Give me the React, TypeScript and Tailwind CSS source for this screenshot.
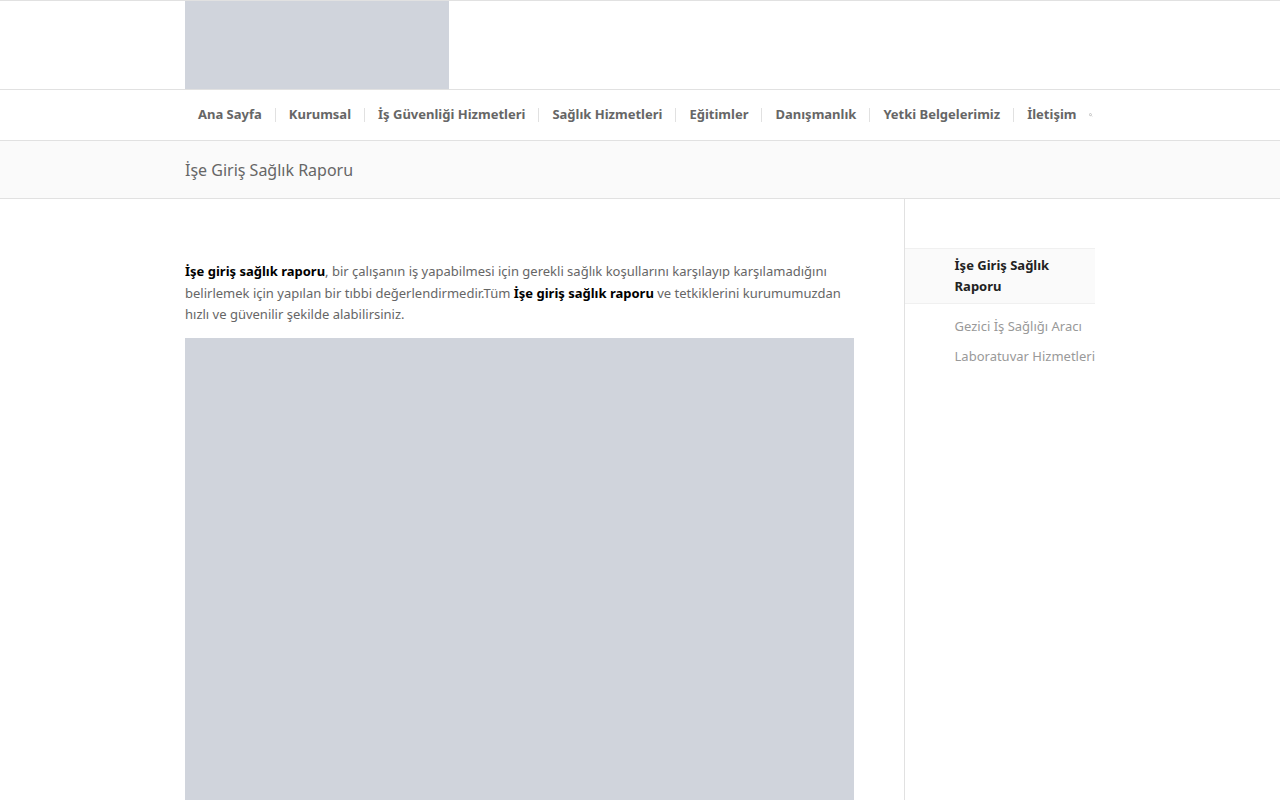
const nav = ["Ana Sayfa", "Kurumsal", "İş Güvenliği Hizmetleri", "Sağlık Hizmetleri", "Eğitimler", "Danışmanlık", "Yetki Belgelerimiz", "İletişim"];

export default function App() {
  return (
    <div className="min-h-[800px] bg-white text-[#666] font-['Liberation_Sans',Arial,sans-serif]">
      <header className="border-t border-[#e1e1e1]">
        <div className="mx-auto w-[910px] h-[88px]">
          <div className="w-[264px] h-[88px] bg-[#d0d4dc]" />
        </div>
        <div className="border-t border-b border-[#e1e1e1]">
          <div className="mx-auto w-[910px] h-[50px] flex items-center">
            {nav.map((n, i) => (
              <div key={n} className="flex items-center">
                {i > 0 && <span className="w-px h-[14px] bg-[#e1e1e1]" />}
                <span className="px-[13px] whitespace-nowrap text-[13px] font-bold text-[#666]">{n}</span>
              </div>
            ))}
            <svg className="ml-auto mr-[2px]" width="14" height="14" viewBox="0 0 14 14" fill="none" stroke="#777" strokeWidth="1.4">
              <circle cx="5.5" cy="5.5" r="4.3" />
              <path d="M8.7 8.7L12.8 12.8" />
            </svg>
          </div>
        </div>
        <div className="bg-[#fafafa] border-b border-[#e1e1e1]">
          <div className="mx-auto w-[910px] h-[57px] flex items-center text-[16px] text-[#666]">İşe Giriş Sağlık Raporu</div>
        </div>
      </header>
      <main className="mx-auto w-[910px] flex">
        <div className="w-[669px] pt-[62px] mr-[50px] text-[13px] leading-[21.5px] text-[#666]">
          <p>
            <b className="text-black">İşe giriş sağlık raporu</b>, bir çalışanın iş yapabilmesi için gerekli sağlık koşullarını karşılayıp karşılamadığını belirlemek için yapılan bir tıbbi değerlendirmedir.Tüm <b className="text-black">İşe giriş sağlık raporu</b> ve tetkiklerini kurumumuzdan hızlı ve güvenilir şekilde alabilirsiniz.
          </p>
          <div className="mt-[12px] h-[470px] bg-[#d0d4dc]" />
        </div>
        <aside className="flex-1 border-l border-[#e1e1e1] pt-[49px] min-h-[601px]">
          <div className="bg-[#fafafa] border-t border-b border-[#f0f0f0] pl-[50px] pr-2 py-[6px] text-[13px] leading-[21px] font-bold text-[#222]">
            İşe Giriş Sağlık<br />Raporu
          </div>
          <div className="pl-[50px] pt-[7px] text-[13px] text-[#999] leading-[30px] whitespace-nowrap">
            <div>Gezici İş Sağlığı Aracı</div>
            <div>Laboratuvar Hizmetleri</div>
          </div>
        </aside>
      </main>
    </div>
  );
}
